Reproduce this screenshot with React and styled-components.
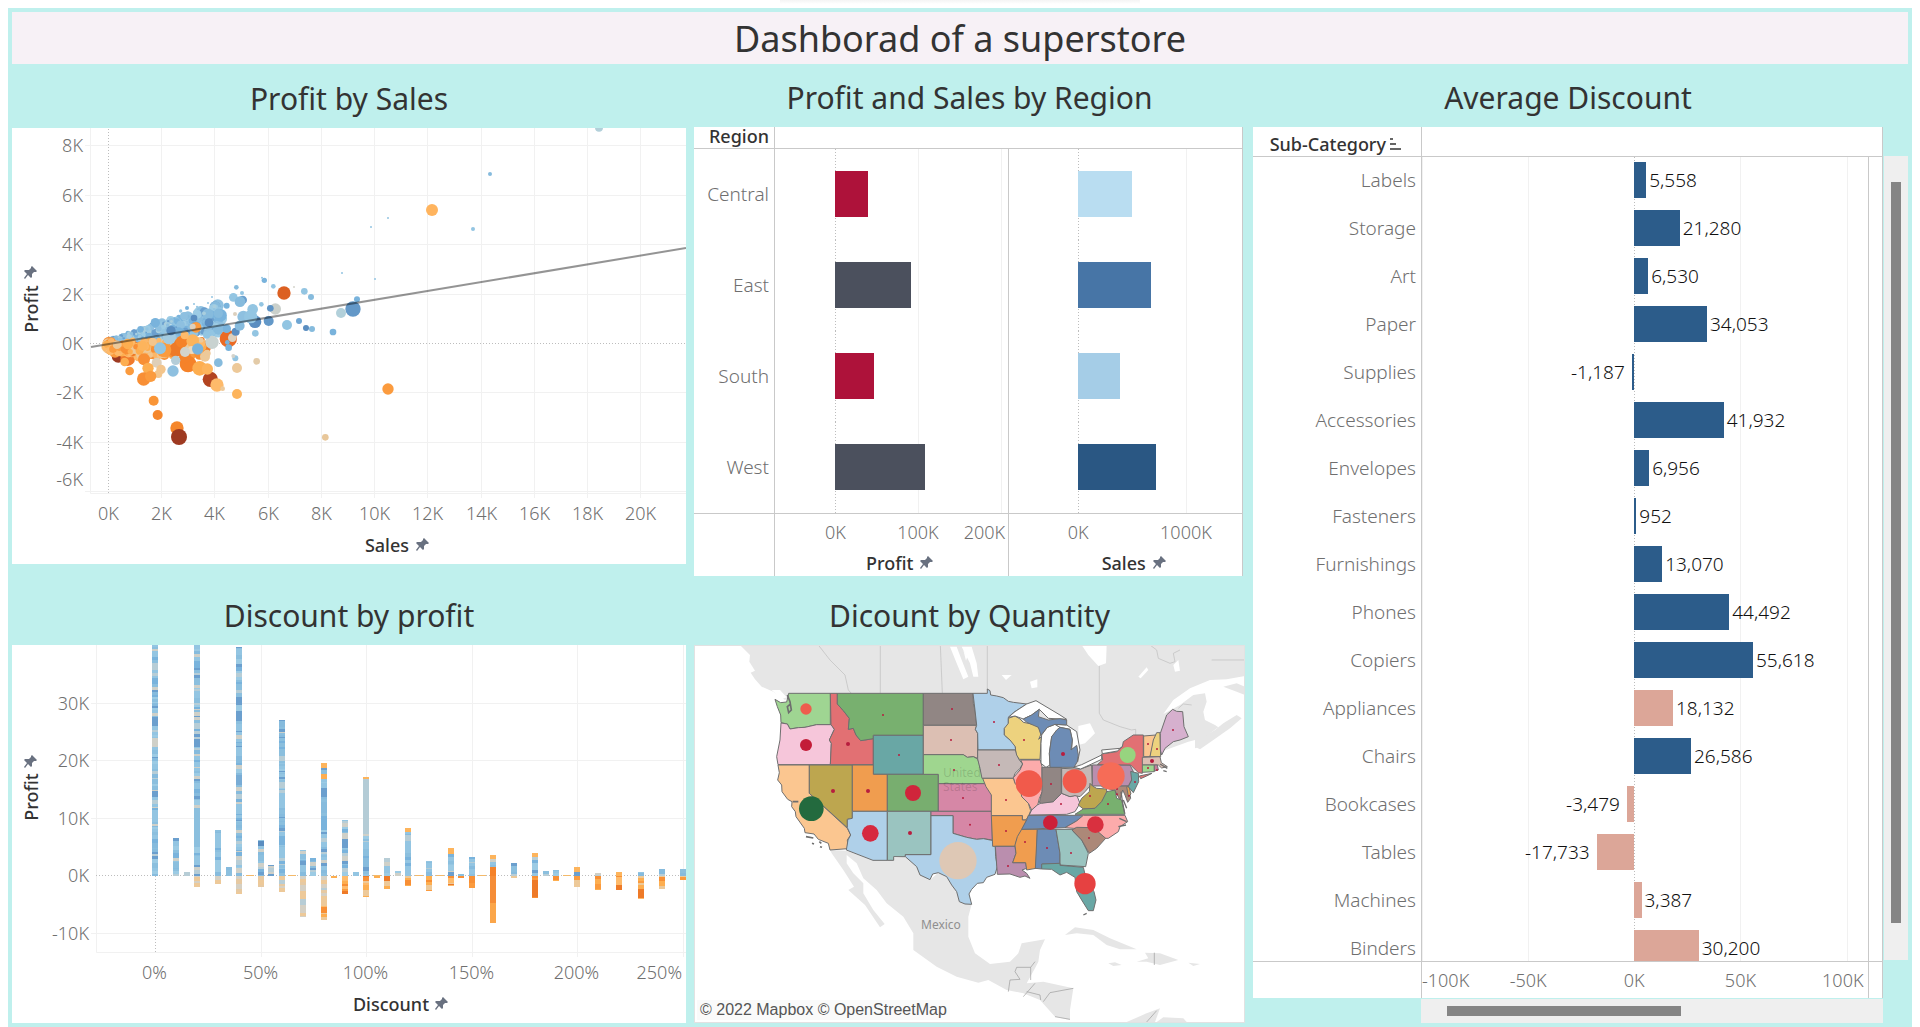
import React from "react";
import styled, { createGlobalStyle } from "styled-components";

const GlobalStyle = createGlobalStyle`
  *, *::before, *::after { box-sizing: border-box; }
  body {
    margin: 0;
    background: #fff;
    color: #333;
    font-family: "Noto Sans", "Open Sans", sans-serif;
    font-size: 18px;
  }
`;

const MINT = "#bff0ed";
const RULE = "#c9c9c9";
const GRID = "#f1f1f1";

const Page = styled.main`
  padding: 8px 8px 0;
  overflow: hidden;
  background: linear-gradient(#f4f4f4, #fff) 50% 0 / 360px 4px no-repeat;
`;
const Board = styled.div`
  padding: 4px;
  background: ${MINT};
`;
const Banner = styled.h1`
  margin: 0;
  height: 52px;
  display: flex;
  align-items: center;
  justify-content: center;
  background: #f7f1f6;
  font-size: 36px;
  font-weight: 400;
`;
const Columns = styled.div`
  display: grid;
  grid-template-columns: minmax(0, 674fr) minmax(0, 551fr) minmax(0, 655fr);
  column-gap: 8px;
`;
const Column = styled.div`
  display: flex;
  flex-direction: column;
`;
const Title = styled.h2`
  margin: 0;
  height: ${(p) => p.$h}px;
  padding: 0 ${(p) => (p.$beside ? 25 : 0)}px 11px 0;
  display: flex;
  align-items: flex-end;
  justify-content: center;
  font-size: 30px;
  line-height: 36px;
  font-weight: 400;
`;
const Chart = styled.svg`
  display: block;
  width: 100%;
  height: auto;
  background: #fff;
  text { font-size: 18px; fill: #6f6f6f; font-weight: 300; }
  text.axis { fill: #333; font-weight: 500; }
`;

/* deterministic noise, so that every paint shows the same marks */
const makeRandom = (seed) => () => {
  seed = (seed * 1664525 + 1013904223) % 4294967296;
  return seed / 4294967296;
};

const PIN = "M8 0 L13 5 L12 6 L10 6 L8 8 L8 11 L7 12 L4 9 L1 13 L0 12 L3 8 L0 5 L1 4 L5 4 L7 2 L7 1 Z";
const PinSvg = styled.svg`
  width: 14px;
  height: 14px;
  flex: none;
`;
const Pin = () => (
  <PinSvg viewBox="0 0 14 14" aria-hidden="true">
    <path d={PIN} fill="#697180" />
  </PinSvg>
);

/* ---------- Profit by Sales ---------- */

const BLUES = ["#93c5e2", "#8ec0e0", "#79b3dc", "#86bbdd", "#9ccbe4", "#6b9fce", "#8ec0e0", "#a9cede"];
const ORANGES = ["#fdae50", "#feba6a", "#f88f35", "#fb9b3e", "#edc999", "#fcb768", "#ee7a28", "#f3c58c"];

const cloud = (() => {
  const rnd = makeRandom(11);
  const out = [];
  for (let i = 0; i < 230; i++) {
    const t = Math.pow(rnd(), 1.5);
    const x = 50 + t * 300;
    out.push([x, 222 - (x - 50) * 0.05 + rnd() * (12 + Math.min(t * 90, 34)), 4 + rnd() * 13, ORANGES[Math.floor(rnd() * 8)]]);
  }
  for (let i = 0; i < 420; i++) {
    const t = Math.pow(rnd(), 1.2);
    const x = 62 + t * 330;
    const mid = 222 - (x - 50) * 0.17;
    out.push([x, mid - 6 + (rnd() - 0.65) * (14 + t * 70), 3 + rnd() * (4 + t * 13), BLUES[Math.floor(rnd() * 8)]]);
  }
  for (let i = 0; i < 70; i++) {
    const x = 52 + rnd() * 180;
    out.push([x, 214 + rnd() * 34 - (x - 50) * 0.04, 5 + rnd() * 9, ORANGES[Math.floor(rnd() * 6)]]);
  }
  return out;
})();

const scatterMarks = [
  [85, 258, 20, "#9e3a22"], [113, 266, 22, "#f07a2c"], [58, 220, 20, "#f88f35"], [75, 245, 18, "#fb9b3e"],
  ...cloud,
  [50, 222, 10, "#fdae50"], [104, 276, 13, "#fdae50"], [162, 268, 18, "#f88f35"],
  [582, 69, 20, "#dc6022"], [191, 392, 15, "#f99537"], [203, 435, 15, "#f5862b"],
  [261, 474, 20, "#f5862b"], [267, 501, 24, "#9e3a22"], [706, 502, 10, "#e8c79a"],
  [441, 372, 15, "#fdb45c"], [441, 294, 15, "#edc999"], [361, 328, 23, "#b34420"],
  [381, 345, 20, "#feba6a"], [398, 356, 7, "#edc999"], [294, 282, 25, "#f58229"],
  [285, 262, 18, "#f58229"], [329, 295, 22, "#fdae50"], [352, 297, 17, "#fdb45c"],
  [249, 303, 17, "#8ec0e0"], [200, 278, 15, "#dfcfb8"], [213, 298, 14, "#f3c58c"],
  [205, 312, 12, "#f3c58c"], [174, 295, 17, "#fdae50"], [161, 327, 20, "#f88f35"],
  [182, 319, 17, "#fb9b3e"], [119, 303, 13, "#fb9b3e"], [345, 260, 15, "#edc999"],
  [351, 250, 11, "#edc999"], [257, 240, 21, "#ee7a28"], [275, 215, 18, "#f58229"],
  [308, 212, 19, "#fdb45c"], [222, 240, 22, "#fb9b3e"], [210, 235, 18, "#92c5e2"],
  [188, 215, 12, "#f3c58c"], [158, 228, 15, "#fdb45c"], [114, 222, 16, "#fdae50"],
  [196, 158, 14, "#79b3dc"], [284, 196, 12, "#feba6a"], [318, 172, 16, "#fb9b3e"], [308, 170, 9, "#dcd0be"],
  [306, 240, 12, "#edd9bd"], [285, 246, 15, "#d3d3cb"], [257, 271, 14, "#b4cdd8"],
  [323, 237, 17, "#79b3dc"], [366, 217, 20, "#c8d2d0"], [415, 206, 26, "#eb6a24"],
  [427, 203, 13, "#dcd0be"], [412, 217, 7, "#79b3dc"], [416, 233, 10, "#79b3dc"],
  [238, 203, 20, "#a4cbe0"], [243, 182, 14, "#5a8dc0"], [312, 144, 10, "#5a8dc0"],
  [350, 195, 11, "#92c5e2"], [357, 158, 13, "#5a8dc0"], [410, 176, 13, "#79b3dc"],
  [385, 180, 14, "#86bbdd"], [437, 185, 12, "#5a8dc0"], [449, 167, 15, "#86bbdd"],
  [556, 117, 17, "#cad0cb"], [495, 155, 19, "#5a8dc0"], [536, 153, 15, "#6398c8"],
  [591, 165, 15, "#92c5e2"], [627, 153, 9, "#6fa6d3"], [648, 174, 9, "#5a8dc0"],
  [666, 177, 9, "#86bbdd"], [663, 81, 9, "#86bbdd"], [643, 64, 10, "#93c5e2"],
  [550, 49, 7, "#93c5e2"], [523, 31, 8, "#79b3dc"], [516, 23, 3, "#93c5e2"],
  [612, 51, 3, "#d5d5cc"], [439, 52, 7, "#86bbdd"], [456, 69, 6, "#93c5e2"],
  [430, 82, 13, "#93c5e2"], [458, 90, 13, "#6b9fce"], [450, 95, 16, "#86bbdd"],
  [410, 107, 9, "#79b3dc"], [385, 130, 14, "#86bbdd"], [488, 118, 16, "#93c5e2"],
  [460, 140, 18, "#8ec0e0"], [482, 140, 20, "#93c5e2"], [514, 103, 7, "#93c5e2"],
  [541, 115, 10, "#5f94c6"], [496, 190, 10, "#93c5e2"], [500, 274, 10, "#e3cba8"],
  [436, 265, 9, "#93c5e2"], [430, 258, 6, "#d3d3cb"], [385, 278, 13, "#86bbdd"],
  [435, 132, 6, "#dcd0be"], [366, 81, 3, "#93c5e2"], [354, 99, 3, "#93c5e2"],
  [312, 102, 3, "#93c5e2"], [321, 110, 3, "#93c5e2"], [291, 114, 6, "#79b3dc"],
  [272, 123, 5, "#93c5e2"], [372, 117, 3, "#93c5e2"],
  [1026, -180, 18, "#ffb45e"], [1200, -288, 6, "#86bbdd"], [1149, -123, 6, "#93c5e2"],
  [894, -156, 3, "#93c5e2"], [843, -129, 3, "#93c5e2"], [894, 357, 17, "#fb9b3e"],
  [1527, -427, 12, "#b2d0da"], [789, 117, 23, "#6398c8"], [753, 129, 15, "#b2d0da"],
  [801, 88, 9, "#79b3dc"], [729, 186, 10, "#79b3dc"], [756, 9, 3, "#93c5e2"], [855, 27, 3, "#93c5e2"],
];

const ScatterChart = () => {
  const xs = [0, 2, 4, 6, 8, 10, 12, 14, 16, 18, 20];
  const ys = [8, 6, 4, 2, 0, -2, -4, -6];
  const X = (k) => Math.round(96 + k * 26.62) + 0.5;
  const Y = (k) => Math.round(215 - k * 24.7) + 0.5;
  return (
    <Chart viewBox="0 0 674 436" role="img" aria-label="Profit by Sales">
      {xs.map((k) => (
        <g key={k}>
          {k > 0 && <line x1={X(k)} x2={X(k)} y1="0" y2="370" stroke={GRID} strokeWidth="1" />}
          <text x={X(k)} y="392" textAnchor="middle">{k}K</text>
        </g>
      ))}
      {ys.map((k) => (
        <g key={k}>
          {k !== 0 && <line x1="73" x2="674" y1={Y(k)} y2={Y(k)} stroke={GRID} strokeWidth="1" />}
          <text x="71" y={(k === -6 ? 352 : Y(k)) + 6} textAnchor="end">{k}K</text>
        </g>
      ))}
      <path d="M78.5 0V365.5H674" fill="none" stroke={GRID} />
      <path d="M96.5 1V366M78 215.5H674" fill="none" stroke="#bdbdbd" strokeDasharray="1 2" />
      <g transform="translate(78 142) scale(0.333333)">
        {scatterMarks.map(([x, y, r, c], i) => (
          <circle key={i} cx={x} cy={y} r={r} fill={c} />
        ))}
      </g>
      <line x1="79" y1="219" x2="674" y2="120" stroke="#000" strokeOpacity="0.42" strokeWidth="2" />
      <text className="axis" x="375" y="424" textAnchor="middle">Sales</text>
      <path d={PIN} fill="#697180" transform="translate(404 410)" />
      <text className="axis" textAnchor="middle" transform="translate(26 181) rotate(-90)">Profit</text>
      <path d={PIN} fill="#697180" transform="translate(12 138)" />
    </Chart>
  );
};

/* ---------- Discount by profit ---------- */

const discountBars = [
  [0, 42, 0], [10, 6.5, 0], [15, 0.6, 0], [20, 42, -2], [30, 8, -1.5], [35, 1.4, 0], [40, 39.7, -3.2],
  [50, 6.1, -2], [55, 1.8, 0], [60, 27, -2.9], [70, 4.5, -7], [75, 3, 0], [80, 19.5, -7.7], [85, 0, -0.4],
  [90, 9.7, -3.2], [95, 0.6, 0], [100, 17.2, -3.6], [105, 0, -0.4], [110, 3, -2.3], [115, 0.7, 0],
  [120, 8.3, -1.8], [130, 2.6, -2.7], [140, 4.7, -1.8], [145, 0.2, -0.4], [150, 3.3, -2.1],
  [160, 3.5, -8.2], [170, 2.1, -0.4], [180, 3.9, -3.8], [185, 0.7, 0], [190, 0.9, -1], [200, 1.4, -2],
  [210, 0.4, -2.5], [220, 0.6, -2.5], [230, 0.6, -3.9], [240, 1.2, -2.3], [250, 1.1, -0.8],
];

const discountSegments = (() => {
  const rnd = makeRandom(5);
  const gain = ["#93c5e2", "#8bbfde", "#86bbdd", "#9ccbe4", "#79b3dc", "#93c5e2", "#b7cdd6", "#cfd0c8", "#8bbfde", "#6b9fce"];
  const lossSoft = ["#edc999", "#e6c9a2", "#d5d0c4", "#b7cdd6", "#edc999"];
  const lossHot = ["#fdae50", "#fb9b3e", "#f88f35", "#feba6a", "#edc999", "#ee7a28"];
  const out = [];
  discountBars.forEach(([pct, up, down]) => {
    let v = 0;
    while (v < up) {
      const step = Math.min(up - v, 0.15 + rnd() * (rnd() > 0.85 ? 1.8 : 0.5));
      let c = gain[Math.floor(rnd() * gain.length)];
      if (pct > 75 && pct % 20 === 0 && up - v < 0.9) c = "#fdb45c";
      if (pct === 160) c = v < 1.3 ? "#f58229" : c;
      out.push([pct, v, v + step, c]);
      v += step;
    }
    v = 0;
    while (v > down) {
      const step = Math.min(v - down, 0.2 + rnd() * 0.8);
      const pool = pct <= 70 || (pct === 80 && v > -4.5) ? lossSoft : lossHot;
      let c = pool[Math.floor(rnd() * pool.length)];
      if (pct === 160) c = v > -3.8 ? "#f58d38" : "#fba64a";
      out.push([pct, v - step, v, c]);
      v -= step;
    }
  });
  out.push([0, 26, 27.6, "#6b9fce"], [20, 5, 11.3, "#8bbfde"], [40, 15.8, 17.5, "#79acd5"]);
  out.push([100, 7.2, 16.7, "#b4ccd6"], [50, 5.2, 6, "#5a8dc0"], [90, 4.8, 6.4, "#6b9fce"], [80, 16.8, 17.6, "#fdae50"]);
  return out;
})();

const DiscountChart = () => {
  const X = (p) => 143 + p * 2.111;
  const Y = (k) => 230.5 - k * 5.75;
  return (
    <Chart viewBox="0 0 674 378" role="img" aria-label="Discount by profit">
      {[0, 50, 100, 150, 200, 250].map((p) => {
        const x = Math.round(X(p)) + 0.5;
        return (
          <g key={p}>
            {p > 0 && <line x1={x} x2={x} y1="0" y2="312" stroke={GRID} />}
            <text x={p === 250 ? 670 : x - 1} y="334" textAnchor={p === 250 ? "end" : "middle"}>{p}%</text>
          </g>
        );
      })}
      {[30, 20, 10, 0, -10].map((k) => {
        const y = Math.round(Y(k) - 0.5) + 0.5;
        return (
          <g key={k}>
            {k !== 0 && <line x1="79" x2="674" y1={y} y2={y} stroke={GRID} />}
            <text x="77" y={y + 6} textAnchor="end">{k}K</text>
          </g>
        );
      })}
      <path d="M84.5 0V307.5H674" fill="none" stroke={GRID} />
      <path d="M143.5 0V307M84 230.5H674" fill="none" stroke="#bdbdbd" strokeDasharray="1 2" />
      <g shapeRendering="crispEdges">
        {[45, 65, 105, 125, 135, 155, 195].map((p) => (
          <rect key={p} x={X(p) - 4} y="230" width="8" height="1" fill="#f3b96a" />
        ))}
        {discountSegments.map(([p, a, b, c], i) => (
          <rect key={i} x={Math.round(X(p)) - 3} y={Y(b)} width="6" height={Math.max(1, (b - a) * 5.75)} fill={c} />
        ))}
      </g>
      <text className="axis" x="379" y="366" textAnchor="middle">Discount</text>
      <path d={PIN} fill="#697180" transform="translate(423 352)" />
      <text className="axis" textAnchor="middle" transform="translate(26 152) rotate(-90)">Profit</text>
      <path d={PIN} fill="#697180" transform="translate(12 110)" />
    </Chart>
  );
};

/* ---------- Profit and Sales by Region ---------- */

const RegionPanel = styled.div`
  display: grid;
  grid-template-columns: 81px minmax(0, 234fr) minmax(0, 234fr);
  grid-template-rows: 22px repeat(4, 91px) 63px;
  margin-right: 2px;
  background: #fff;
  border-right: 1px solid ${RULE};
`;
const RegionHead = styled.div`
  padding-right: 5px;
  text-align: right;
  font-weight: 500;
  line-height: 18px;
  border-right: 1px solid ${RULE};
  border-bottom: 1px solid ${RULE};
`;
const HeadFill = styled.div`
  grid-column: span 2;
  border-bottom: 1px solid ${RULE};
`;
const RegionName = styled.div`
  padding: 0 5px 0 0;
  text-align: right;
  line-height: 91px;
  color: #6f6f6f;
  font-size: 19px;
  font-weight: 300;
  border-right: 1px solid ${RULE};
`;
const RegionCell = styled.div`
  position: relative;
  display: flex;
  align-items: center;
  padding-bottom: 1px;
  border-right: ${(p) => (p.$divided ? `1px solid ${RULE}` : "0")};
`;
const GridLine = styled.i`
  position: absolute;
  top: 0;
  bottom: 0;
  width: 1px;
  background: ${(p) => (p.$zero ? "repeating-linear-gradient(#bdbdbd 0 1px, transparent 1px 3px)" : GRID)};
`;
const RegionBar = styled.div`
  position: relative;
  height: 46px;
  background: ${(p) => p.$color};
`;
const RegionFoot = styled.div`
  position: relative;
  display: flex;
  flex-direction: column;
  justify-content: flex-end;
  align-items: center;
  padding: 0 0 3px 18px;
  border-top: 1px solid ${RULE};
  border-right: ${(p) => (p.$divided ? `1px solid ${RULE}` : "0")};
`;
const Tick = styled.span`
  position: absolute;
  top: 6px;
  line-height: 24px;
  color: #6f6f6f;
  font-weight: 300;
  transform: translateX(${(p) => (p.$end ? "-100%" : p.$start ? "0" : "-50%")});
`;
const AxisName = styled.div`
  display: flex;
  align-items: center;
  gap: 7px;
  line-height: 20px;
  font-weight: 500;
`;

const regions = [
  { name: "Central", profit: 39.7, sales: 501, pc: "#ae123a", sc: "#b9ddf1" },
  { name: "East", profit: 91.5, sales: 679, pc: "#4b505d", sc: "#4775a6" },
  { name: "South", profit: 46.7, sales: 392, pc: "#ae123a", sc: "#a5cde7" },
  { name: "West", profit: 108.4, sales: 725, pc: "#4b505d", sc: "#2a5783" },
];

const RegionChart = () => (
  <RegionPanel>
    <RegionHead>Region</RegionHead>
    <HeadFill />
    {regions.map((r) => (
      <React.Fragment key={r.name}>
        <RegionName>{r.name}</RegionName>
        <RegionCell $divided>
          <GridLine $zero style={{ left: "26%" }} />
          <GridLine style={{ left: "61.5%" }} />
          <GridLine style={{ left: "97%" }} />
          <RegionBar $color={r.pc} style={{ marginLeft: "26%", width: `${r.profit * 0.355}%` }} />
        </RegionCell>
        <RegionCell>
          <GridLine $zero style={{ left: "29.8%" }} />
          <GridLine style={{ left: "76%" }} />
          <RegionBar $color={r.sc} style={{ marginLeft: "29.8%", width: `${r.sales * 0.0463}%` }} />
        </RegionCell>
      </React.Fragment>
    ))}
    <RegionFoot $divided />
    <RegionFoot $divided>
      <Tick style={{ left: "26%" }}>0K</Tick>
      <Tick style={{ left: "61.5%" }}>100K</Tick>
      <Tick $end style={{ left: "99%" }}>200K</Tick>
      <AxisName>Profit <Pin /></AxisName>
    </RegionFoot>
    <RegionFoot>
      <Tick style={{ left: "29.8%" }}>0K</Tick>
      <Tick style={{ left: "76%" }}>1000K</Tick>
      <AxisName>Sales <Pin /></AxisName>
    </RegionFoot>
  </RegionPanel>
);

/* ---------- Average Discount ---------- */

const SubLayout = styled.div`
  display: grid;
  grid-template-columns: minmax(0, 1fr) 24px;
  column-gap: 1px;
`;
const SubPanel = styled.div`
  display: grid;
  grid-template-columns: 169px minmax(0, 1fr) 13px;
  grid-template-rows: 30px 804px 37px;
  background: #fff;
  border-right: 1px solid ${RULE};
`;
const SubHead = styled.div`
  display: flex;
  align-items: center;
  justify-content: flex-end;
  gap: 4px;
  padding: 5px 20px 0 0;
  font-weight: 500;
  border-right: 1px solid ${RULE};
  border-bottom: 1px solid ${RULE};
`;
const SubNames = styled.ul`
  margin: 0;
  padding: 0 5px 0 0;
  list-style: none;
  overflow: hidden;
  text-align: right;
  line-height: 46px;
  color: #6f6f6f;
  font-size: 19px;
  font-weight: 300;
  border-right: 1px solid ${RULE};

  li { height: 48px; }
`;
const SubPlot = styled.div`
  position: relative;
  overflow: hidden;
  border-right: 1px solid ${RULE};
`;
const SubRow = styled.div`
  position: relative;
  display: flex;
  height: 48px;
  padding-bottom: 2px;
`;
const Half = styled.div`
  display: flex;
  align-items: center;
  justify-content: ${(p) => (p.$left ? "flex-end" : "flex-start")};
  width: ${(p) => (p.$left ? "47.6%" : "52.4%")};
`;
const SubBar = styled.div`
  height: 36px;
  background: ${(p) => p.$color};
`;
const Value = styled.span`
  padding: ${(p) => (p.$left ? "0 7px" : "0 3px")};
  color: #111;
  font-size: 19px;
  font-weight: 300;
`;
const SubFoot = styled.div`
  position: relative;
  border-top: 1px solid ${RULE};
  border-right: ${(p) => (p.$divided ? `1px solid ${RULE}` : "0")};
`;
const VTrack = styled.div`
  margin-top: 29px;
  height: 804px;
  padding: 26px 7px 37px;
  display: flex;
  background: #efefef;
`;
const HTrack = styled.div`
  margin: 1px 0 0 168px;
  height: 24px;
  padding: 7px 32% 7px 26px;
  display: flex;
  background: #efefef;
`;
const Thumb = styled.div`
  flex: 1;
  background: #858585;
`;

const NAVY = "#2c5c8a";
const ROSE = "#dca698";
const subs = [
  ["Labels", 5558, NAVY], ["Storage", 21280, NAVY], ["Art", 6530, NAVY], ["Paper", 34053, NAVY],
  ["Supplies", -1187, NAVY], ["Accessories", 41932, NAVY], ["Envelopes", 6956, NAVY], ["Fasteners", 952, NAVY],
  ["Furnishings", 13070, NAVY], ["Phones", 44492, NAVY], ["Copiers", 55618, NAVY], ["Appliances", 18132, ROSE],
  ["Chairs", 26586, NAVY], ["Bookcases", -3479, ROSE], ["Tables", -17733, ROSE], ["Machines", 3387, ROSE],
  ["Binders", 30200, ROSE],
];

const SubChart = () => (
  <SubLayout>
    <SubPanel>
      <SubHead>
        Sub-Category
        <svg width="11" height="12" aria-hidden="true">
          <path d="M0 1h3M0 6h6M0 11h11" stroke="#666" strokeWidth="2" />
        </svg>
      </SubHead>
      <HeadFill />
      <SubNames>{subs.map(([n]) => <li key={n}>{n}</li>)}</SubNames>
      <SubPlot>
        {[0, 23.8, 71.4, 95.2].map((p) => <GridLine key={p} style={{ left: `${p}%` }} />)}
        <GridLine $zero style={{ left: "47.6%" }} />
        {subs.map(([n, v, c]) => (
          <SubRow key={n}>
            <Half $left>
              {v < 0 && <Value $left>{v.toLocaleString("en-US")}</Value>}
              {v < 0 && <SubBar $color={c} style={{ width: `${-v / 1000}%` }} />}
            </Half>
            <Half>
              {v > 0 && <SubBar $color={c} style={{ width: `${v / 1095}%` }} />}
              {v > 0 && <Value>{v.toLocaleString("en-US")}</Value>}
            </Half>
          </SubRow>
        ))}
      </SubPlot>
      <div />
      <SubFoot $divided />
      <SubFoot $divided>
        <Tick $start style={{ left: 0 }}>-100K</Tick>
        <Tick style={{ left: "23.8%" }}>-50K</Tick>
        <Tick style={{ left: "47.6%" }}>0K</Tick>
        <Tick style={{ left: "71.4%" }}>50K</Tick>
        <Tick $end style={{ left: "99%" }}>100K</Tick>
      </SubFoot>
      <SubFoot />
    </SubPanel>
    <VTrack><Thumb /></VTrack>
    <HTrack><Thumb /></HTrack>
  </SubLayout>
);

/* ---------- Dicount by Quantity ---------- */

const MapFrame = styled.div`
  position: relative;
`;
const MapSvg = styled.svg`
  display: block;
  width: 100%;
  height: auto;
  background: #fff;
  text { font-size: 12px; }
`;
const Credit = styled.div`
  position: absolute;
  left: 3px;
  bottom: 3px;
  padding: 0 3px;
  background: #fafafa;
  color: #555;
  font: 16px/20px "Liberation Sans", Arial, sans-serif;
`;

const westStates = [
  ["255,178 272,188 290,186 296,160 421,160 421,254 380,254 345,262 325,263 300,267 292,252 273,248 272,225 262,200", "#9fd592"],
  ["273,249 292,252 300,267 325,263 345,262 380,254 425,254 433,268 418,300 424,310 421,374 264,374 260,350 270,300", "#f6c6da"],
  ["264,375 358,375 358,460 472,565 482,585 472,600 474,626 420,630 415,610 385,598 372,582 345,578 343,565 318,530 316,515 305,500 306,485 293,478 276,455 275,435 263,420 268,398", "#fbc690"],
  ["358,375 487,375 487,535 472,538 472,563 358,460", "#bda64f"],
  ["421,160 442,160 442,192 460,212 478,235 475,268 490,265 498,285 512,302 550,296 550,374 421,374 424,310 418,300 433,268 423,254", "#e27073"],
  ["442,160 700,160 700,286 550,286 550,296 512,302 498,285 490,265 475,268 478,235 460,212 442,192", "#78b06f"],
  ["550,286 700,286 700,403 550,403", "#69a7a5"],
  ["487,375 550,375 550,403 592,403 592,514 487,514", "#f09d4f"],
  ["592,403 745,403 745,514 592,514", "#78ae6f"],
  ["487,514 592,514 592,661 549,661 469,630 474,600 482,585 472,563 472,538 487,535", "#afd0e9"],
  ["592,514 723,514 723,644 646,644 646,650 611,650 611,661 592,661", "#9ac4c0"],
  ["700,160 849,160 850,190 855,210 860,256 700,256", "#918684"],
  ["700,256 860,256 856,268 863,280 863,355 850,350 832,352 820,344 700,344", "#dcbfb3"],
  ["700,344 820,344 832,352 850,350 863,357 872,385 878,410 888,431 745,431 745,403 700,403", "#9fd68f"],
  ["745,431 890,431 905,460 905,514 745,514", "#d687a6"],
  ["723,514 905,514 907,600 880,596 860,598 830,592 789,580 789,527 723,527", "#d687a6"],
  ["723,527 789,527 789,580 830,592 860,598 880,596 915,603 917,650 922,680 915,703 890,712 880,728 862,730 845,748 837,762 845,793 825,792 808,785 800,755 785,735 770,710 745,698 728,702 720,719 690,705 680,680 646,650 646,644 723,644", "#afd0e9"],
];
const eastStates = [
  ["39,160 82,160 82,147 90,152 92,165 110,168 130,173 145,184 160,187 200,192 160,218 145,232 145,255 133,265 133,285 150,300 165,315 167,330 54,330 53,280 46,268 50,256 45,210", "#afd0e9"],
  ["145,235 165,228 180,237 190,247 230,255 240,270 243,282 236,298 244,290 240,358 178,358 168,345 166,320 150,300 133,285 133,265 145,250", "#edd27e"],
  ["53,330 166,330 170,345 178,360 188,372 180,385 165,400 160,415 66,415 60,385 53,357", "#c5b9b7"],
  ["182,360 241,360 246,380 247,455 238,475 232,500 215,510 205,490 185,470 182,450 165,430 160,413 180,390 188,372", "#fcabab"],
  ["68,415 160,415 165,430 182,450 185,470 205,490 212,512 205,530 197,540 187,540 187,527 94,527 94,465 78,440", "#fbc690"],
  ["94,527 187,527 187,540 200,540 185,570 170,600 165,619 98,619", "#f09d4f"],
  ["106,619 165,619 168,640 158,668 197,668 200,685 186,690 200,700 210,715 195,708 180,712 150,702 112,703", "#ba8eae"],
  ["185,568 232,568 228,685 200,690 197,668 158,668 168,640 165,615 172,590", "#f09d4f"],
  ["232,568 288,568 300,640 300,670 247,672 245,687 226,685", "#6d8cb5"],
  ["288,568 345,568 340,575 365,600 385,640 377,680 300,675 300,640", "#9ac4c0"],
  ["245,672 300,670 300,676 370,682 372,690 378,715 402,755 408,780 400,812 385,812 365,780 350,755 345,712 320,697 300,705 275,688 245,687", "#69a7a5"],
  ["205,526 370,526 350,543 315,563 185,568 200,540", "#6d8cb5"],
  ["208,525 215,510 232,495 245,488 280,485 305,460 330,470 350,465 360,490 345,515 320,523", "#f6c6da"],
  ["246,382 304,382 304,460 280,485 245,490 238,488 246,455", "#918684"],
  ["305,385 345,387 362,387 395,375 397,430 375,455 360,470 345,467 330,470 305,460", "#c5b9b7"],
  ["397,375 510,375 520,395 515,420 505,438 397,438", "#ba8eae"],
  ["412,374 428,360 425,342 470,335 487,320 490,305 520,285 550,285 550,350 547,400 535,398 512,375", "#e27073"],
  ["538,408 576,400 560,408 542,416", "#e27073"],
  ["425,440 505,438 512,475 503,487 495,465 488,450 480,480 465,452 445,446", "#ac8878"],
  ["500,440 507,440 513,462 505,470", "#e2a04f"],
  ["512,394 535,400 536,425 520,458 505,440 515,420", "#69a7a5"],
  ["397,438 410,445 440,447 440,460 425,485 405,505 370,507 355,495 365,475 388,455 390,430", "#bda64f"],
  ["345,523 370,507 405,505 425,485 440,455 465,450 470,475 485,480 495,523", "#78b06f"],
  ["370,526 495,526 503,545 480,560 475,575 445,595 430,595 400,565 340,565 315,563 350,543", "#fcabab"],
  ["336,570 350,562 400,563 437,595 410,625 388,640 365,600", "#ac8878"],
  ["551,288 588,285 570,350 551,350", "#fbc690"],
  ["570,350 580,300 590,278 600,278 602,350", "#edd27e"],
  ["547,352 600,350 604,368 622,380 605,384 595,375 547,375", "#dcbfb3"],
  ["547,375 583,375 583,395 547,397", "#9fd68f"],
  ["583,375 592,375 595,390 583,393", "#c77d9c"],
  ["601,280 620,225 638,208 650,214 668,215 672,260 685,290 660,300 640,305 615,325 605,345 601,330", "#d6b0ce"],
];
const lakes = [
  "145,232 165,215 200,192 228,182 300,225 320,238 265,235 238,208 215,225 190,237 165,228",
  "245,285 262,262 285,253 300,262 275,290 268,340 270,375 258,382 243,370 243,310",
  "285,253 320,255 350,275 360,330 353,365 350,318 335,330 337,300 330,268 300,262",
  "340,382 365,374 425,345 425,358 395,372 362,387",
  "425,330 480,325 487,320 472,333 427,341",
];
const michigan = [
  "190,237 215,225 238,208 235,230 265,240 300,236 320,240 320,255 285,253 262,262 243,285 235,262 200,247",
  "270,382 268,340 275,290 290,270 300,262 330,268 337,300 333,330 350,316 355,345 352,365 342,382",
];
const westDots = [
  [579, 225], [474, 312, 6], [627, 345], [429, 453, 6], [534, 453, 6], [660, 579, 6], [786, 207], [783, 300],
  [792, 390], [819, 474], [840, 554], [348, 207, 17, "#ee5d4d"], [348, 315, 18, "#c31c38"],
  [669, 459, 24, "#d0253b"], [541, 580, 25, "#d6293f"], [364, 506, 37, "#236a3e"], [804, 662, 56, "#dec8b5"],
];
const eastDots = [
  [102, 246], [192, 300], [309, 342, 6], [117, 375], [138, 480], [138, 573], [195, 606], [261, 624], [333, 639],
  [144, 678], [387, 594], [273, 432], [303, 492], [390, 468], [444, 492], [471, 447], [471, 463], [507, 467],
  [525, 426], [564, 384], [591, 390], [576, 363, 6], [564, 312], [591, 327], [639, 270],
  [207, 431, 40, "#f15a4b"], [344, 424, 36, "#f15a4b"], [453, 408, 41, "#f66c57"], [503, 345, 24, "#97d47f"],
  [271, 548, 22, "#cc2039"], [406, 554, 25, "#d9303f"], [375, 731, 32, "#e64141"],
];
const land = [
  "150,15 1665,15 1665,108 1610,118 1560,120 1500,145 1450,180 1420,222 1470,195 1510,165 1545,160 1550,185 1540,215 1545,240 1575,255 1585,262 1560,280 1530,320 1515,325 1515,300 1495,305 1400,340 1300,420 900,430 300,170 285,180 250,155 215,140 195,118 182,98 195,92 178,65 180,45",
  "1515,320 1540,290 1575,270 1600,250 1640,225 1655,235 1620,265 1570,300 1530,328",
  "1600,140 1640,130 1665,140 1665,165 1640,155",
  "420,630 470,632 549,661 646,650 680,680 720,719 745,698 770,710 800,755 808,785 845,793 835,830 835,890 855,940 900,972 960,965 985,940 995,910 1065,898 1050,930 1045,965 1035,985 1010,1030 1060,1025 1150,1045 1140,1110 1140,1140 1095,1130 1050,1080 1000,1060 950,1050 895,1020 865,1028 800,1010 740,980 670,930 670,880 640,830 590,790 560,750 520,715 500,670 470,645 470,670 490,700 520,730 520,760 550,810 584,852 570,862 525,795 475,750 492,740 460,690 425,640",
  "1125,885 1155,862 1210,870 1260,895 1340,928 1290,928 1250,915 1210,885 1160,880",
  "1365,938 1410,940 1465,960 1410,975 1370,965 1340,965 1375,955",
  "1255,970 1275,967 1295,975 1270,978", "1495,968 1530,972 1510,978",
  "1310,1146 1370,1120 1410,1105 1395,1146", "1400,1146 1420,1132 1480,1135 1490,1146",
];
const water = [
  "780,20 800,20 815,60 835,110 820,118 800,70", "815,20 845,20 860,70 865,110 850,110 840,70",
  "1175,15 1250,15 1248,70 1225,78 1195,45", "245,150 270,150 290,172 275,178",
  "820,30 832,50 828,62", "1020,125 1042,118 1042,142 1025,145", "935,105 965,105 948,120",
  "1345,110 1370,82 1375,90 1352,115", "1450,75 1465,60 1470,92 1455,95",
  "1165,258 1200,250 1215,280 1185,310 1165,315",
];

const Shapes = ({ items }) =>
  items.map(([pts, c], i) => (
    <polygon key={i} points={pts} fill={c} stroke="#6e6e6e" strokeWidth="3" strokeLinejoin="round" />
  ));
const Dots = ({ items }) =>
  items.map(([x, y, r = 3, c = "#b71d3e"], i) => <circle key={i} cx={x} cy={y} r={r} fill={c} />);

const QuantityMap = () => (
  <MapFrame>
    <MapSvg viewBox="4 5 551 378" role="img" aria-label="Discount by quantity across the United States">
      <g transform="scale(0.333333)">
        {land.map((p) => <polygon key={p} points={p} fill="#e6e6e6" />)}
        {water.map((p) => <polygon key={p} points={p} fill="#fff" />)}
        <g fill="none" stroke="#bcbcbc" strokeWidth="2">
          <path d="M385 15L420 60L465 105L475 150L484 160M571 15V160M751 15L757 160M892 15V150M1228 78V220L1240 240L1290 260L1325 270L1337 268V285M1380 15L1400 30L1405 55L1440 70L1455 65L1450 40L1470 30M1565 60L1665 60M1465 205L1480 192L1505 195" />
          <path stroke="#9a9a9a" d="M955 1055L960 1020L990 1018L975 995L980 982H1022L1035 965M1022 982V1020M1000 1070L1035 1030M1010 1055L1050 1065L1052 1080M1060 1085L1080 1058L1150 1045M1095 1130L1140 1138M1393 938V975M1370 1146L1400 1112" />
        </g>
        <Shapes items={westStates} />
        <g transform="translate(810 0)">
          <Shapes items={eastStates} />
          <Shapes items={lakes.map((p) => [p, "#fff"])} />
          <Shapes items={michigan.map((p) => [p, "#6d8cb5"])} />
          <path d="M490 480L500 505M483 455L488 490L494 520M478 535L500 545M475 560L498 555M600 372L622 385M610 392L620 395M370 825L380 820" stroke="#6e6e6e" strokeWidth="4" fill="none" />
        </g>
        <path d="M292 165L300 185L304 210L296 218L292 200L302 192M308 485H325M348 590L370 594M366 610L372 612M388 605L394 610M390 620L396 622" stroke="#6e6e6e" strokeWidth="5" fill="none" />
      </g>
      <g fill="#000" fillOpacity="0.15">
        <text x="253" y="137">United</text>
        <text x="253" y="151">States</text>
      </g>
      <text x="231" y="289" fill="#8f8f8f">Mexico</text>
      <g transform="scale(0.333333)">
        <Dots items={westDots} />
        <g transform="translate(810 0)"><Dots items={eastDots} /></g>
      </g>
      <rect x="4.5" y="5.5" width="550" height="377" fill="none" stroke="#e2e2e2" />
    </MapSvg>
    <Credit>© 2022 Mapbox © OpenStreetMap</Credit>
  </MapFrame>
);

export default function App() {
  return (
    <Page>
      <GlobalStyle />
      <Board>
        <Banner>Dashborad of a superstore</Banner>
        <Columns>
          <Column>
            <Title $h={64}>Profit by Sales</Title>
            <ScatterChart />
            <Title $h={81}>Discount by profit</Title>
            <DiscountChart />
          </Column>
          <Column>
            <Title $h={63}>Profit and Sales by Region</Title>
            <RegionChart />
            <Title $h={69}>Dicount by Quantity</Title>
            <QuantityMap />
          </Column>
          <Column>
            <Title $h={63} $beside>Average Discount</Title>
            <SubChart />
          </Column>
        </Columns>
      </Board>
    </Page>
  );
}
